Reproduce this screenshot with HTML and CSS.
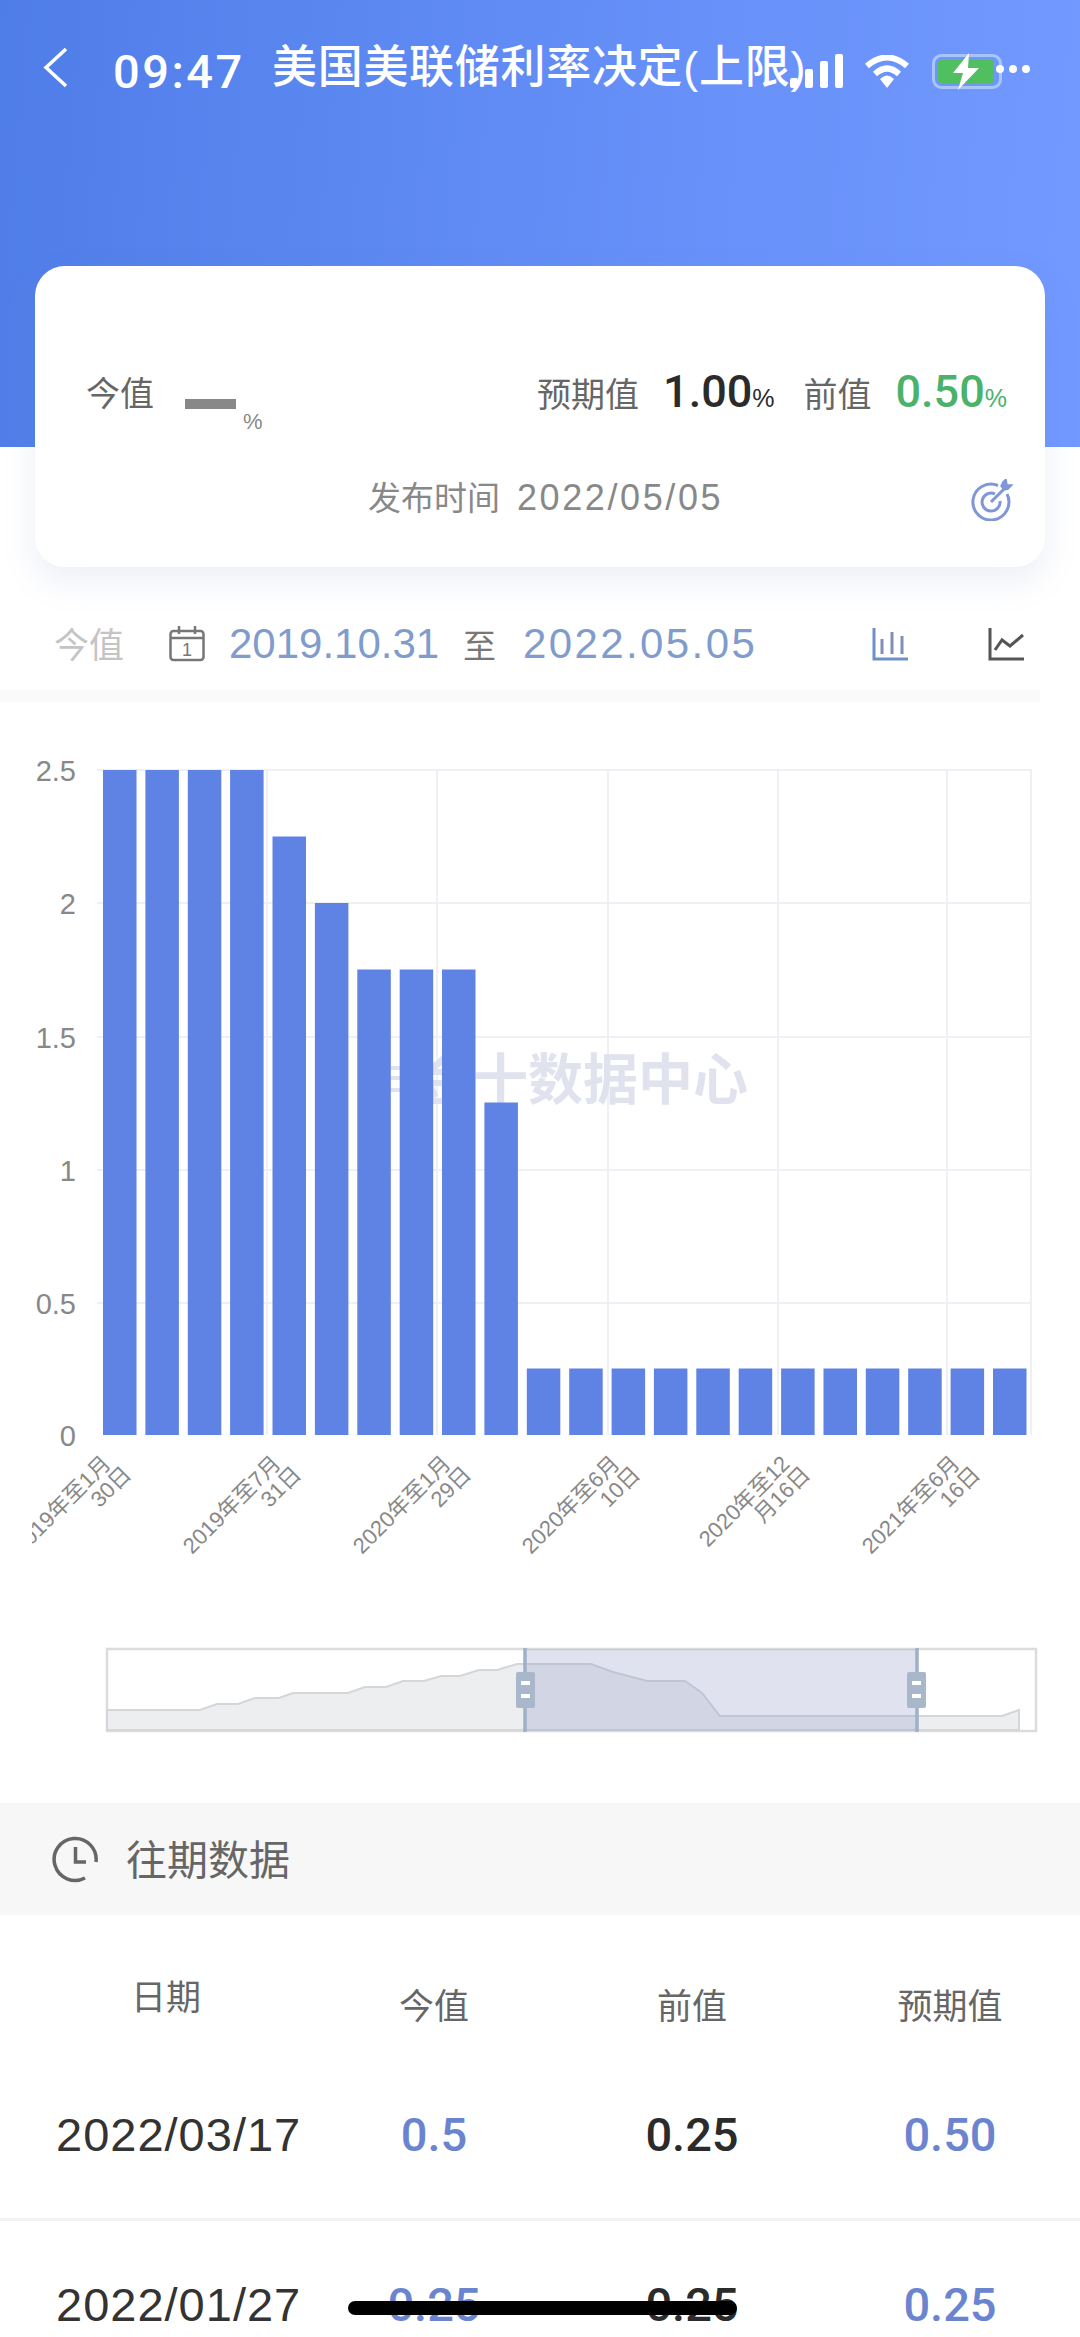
FILE: index.html
```html
<!DOCTYPE html>
<html lang="zh-CN">
<head>
    <meta charset="UTF-8">
    <meta name="viewport" content="width=device-width, initial-scale=1.0">
    <title>美国美联储利率决定(上限)</title>
    <link rel="stylesheet" href="styles.css">
</head>
<body>
    <div class="page">
        <!-- 顶部 -->
        <div class="header">
            <svg class="back" width="25" height="41" viewBox="0 0 25 41"><path d="M23 2 L3 20.5 L23 39" fill="none" stroke="#fff" stroke-width="3.5"/></svg>
            <span class="time">09:47</span>
            <span class="title">美国美联储利率决定(上限)</span>
            <svg class="signal" width="53" height="34" viewBox="0 0 53 34">
                <rect x="0" y="24" width="8" height="10" rx="2" fill="#fff"/>
                <rect x="15" y="15" width="8" height="19" rx="2" fill="#fff"/>
                <rect x="30" y="7" width="8" height="27" rx="2" fill="#fff"/>
                <rect x="45" y="0" width="8" height="34" rx="2" fill="#fff"/>
            </svg>
            <svg class="wifi" width="46" height="33" viewBox="0 0 46 33">
                <path d="M3 11 Q23 -6 43 11" fill="none" stroke="#fff" stroke-width="6"/>
                <path d="M11 19 Q23 8 35 19" fill="none" stroke="#fff" stroke-width="6"/>
                <path d="M16 24 Q23 17 30 24 L23 33 Z" fill="#fff"/>
            </svg>
            <svg class="battery" width="70" height="37" viewBox="0 0 70 37">
                <rect x="1.5" y="2.5" width="67" height="32" rx="8" fill="none" stroke="#a9c4f7" stroke-width="3"/>
                <rect x="6" y="7" width="56" height="23" rx="3" fill="#4fbf5f"/>
                <path d="M37 0 L21 20 H31 L26 37 L47 15 H36 Z" fill="#fff"/>
            </svg>
            <svg class="dots" width="36" height="10" viewBox="0 0 36 10">
                <circle cx="5" cy="5" r="4" fill="#fff"/>
                <circle cx="18" cy="5" r="4" fill="#fff"/>
                <circle cx="31" cy="5" r="4" fill="#fff"/>
            </svg>
        </div>

        <!-- 数值卡片 -->
        <div class="card">
            <div class="card-top">
                <div class="now">
                    <span class="label">今值</span>
                    <span class="dash"></span>
                    <span class="now-unit">%</span>
                </div>
                <div class="others">
                    <span class="label">预期值</span>
                    <span class="num dark">1.00</span><span class="unit dark">%</span>
                    <span class="label second">前值</span>
                    <span class="num green">0.50</span><span class="unit green">%</span>
                </div>
            </div>
            <div class="card-bottom">
                <div class="publish">发布时间<span class="publish-date">2022/05/05</span></div>
                <svg class="target" width="42" height="42" viewBox="0 0 42 42" fill="none" stroke="#7f96d8" stroke-width="3">
                    <path d="M27 6.5 A18 18 0 1 0 36 15"/>
                    <path d="M24 15 A9 9 0 1 0 29 22"/>
                    <path d="M20 23 L33 10"/>
                    <path d="M30 7 L32 3 L35 0 L36 6 L41 6 L37 10 L33 11 Z" fill="#7f96d8" stroke-width="1.5"/>
                </svg>
            </div>
        </div>

        <!-- 日期选择 -->
        <div class="range">
            <span class="range-name">今值</span>
            <svg class="calendar" width="36" height="36" viewBox="0 0 36 36" fill="none" stroke="#777" stroke-width="2.5">
                <rect x="1.5" y="5" width="33" height="29" rx="3"/>
                <path d="M1.5 12 H34.5 M10 0 V8 M26 0 V8"/>
                <text class="calendar-day" x="18" y="30">1</text>
            </svg>
            <span class="date-from">2019.10.31</span>
            <span class="to">至</span>
            <span class="date-to">2022.05.05</span>
            <svg class="chart-btn bar-btn" width="36" height="33" viewBox="0 0 36 33" fill="none" stroke-width="3">
                <path d="M2 0 V31 H36" stroke="#6f8fc8"/>
                <path d="M10 11 V26 M20 4 V26 M30 8 V26" stroke="#7f8fb8"/>
            </svg>
            <svg class="chart-btn line-btn" width="36" height="33" viewBox="0 0 36 33" fill="none" stroke="#555" stroke-width="3">
                <path d="M2 0 V31 H36"/>
                <path d="M7 22 L14 12 L22 18 L35 7"/>
            </svg>
        </div>
        <div class="band"></div>

        <!-- 图表 -->
        <svg class="chart" width="1080" height="1101" viewBox="0 702 1080 1101">
            <defs>
                <clipPath id="labelClip"><rect x="32" y="1440" width="1020" height="130"/></clipPath>
            </defs>
            <g class="grid">
                <path d="M97 770 H1032 M97 903 H1032 M97 1037 H1032 M97 1170 H1032 M97 1303 H1032"/>
                <path d="M267 770 V1435 M437 770 V1435 M608 770 V1435 M778 770 V1435 M947 770 V1435 M1031 770 V1435"/>
            </g>
            <path class="watermark-mark" d="M391 1068 H400 M391 1078 H400 M391 1090 H400"/>
            <text class="watermark" x="418" y="1099">金十数据中心</text>
            <g class="bars">
                <rect x="103" y="770" width="33.5" height="665"/>
                <rect x="145.4" y="770" width="33.5" height="665"/>
                <rect x="187.8" y="770" width="33.5" height="665"/>
                <rect x="230.1" y="770" width="33.5" height="665"/>
                <rect x="272.5" y="836.5" width="33.5" height="598.5"/>
                <rect x="314.9" y="903" width="33.5" height="532"/>
                <rect x="357.3" y="969.5" width="33.5" height="465.5"/>
                <rect x="399.7" y="969.5" width="33.5" height="465.5"/>
                <rect x="442" y="969.5" width="33.5" height="465.5"/>
                <rect x="484.4" y="1102.5" width="33.5" height="332.5"/>
                <rect x="526.8" y="1368.5" width="33.5" height="66.5"/>
                <rect x="569.2" y="1368.5" width="33.5" height="66.5"/>
                <rect x="611.6" y="1368.5" width="33.5" height="66.5"/>
                <rect x="653.9" y="1368.5" width="33.5" height="66.5"/>
                <rect x="696.3" y="1368.5" width="33.5" height="66.5"/>
                <rect x="738.7" y="1368.5" width="33.5" height="66.5"/>
                <rect x="781.1" y="1368.5" width="33.5" height="66.5"/>
                <rect x="823.5" y="1368.5" width="33.5" height="66.5"/>
                <rect x="865.8" y="1368.5" width="33.5" height="66.5"/>
                <rect x="908.2" y="1368.5" width="33.5" height="66.5"/>
                <rect x="950.6" y="1368.5" width="33.5" height="66.5"/>
                <rect x="993" y="1368.5" width="33.5" height="66.5"/>
            </g>
            <g class="y-axis">
                <text x="76" y="781">2.5</text>
                <text x="76" y="914">2</text>
                <text x="76" y="1048">1.5</text>
                <text x="76" y="1181">1</text>
                <text x="76" y="1314">0.5</text>
                <text x="76" y="1446">0</text>
            </g>
            <g class="x-axis" clip-path="url(#labelClip)">
                <text transform="translate(112 1465) rotate(-45)"><tspan x="0" y="0">2019年至1月</tspan><tspan x="7" y="22">30日</tspan></text>
                <text transform="translate(282 1465) rotate(-45)"><tspan x="0" y="0">2019年至7月</tspan><tspan x="7" y="22">31日</tspan></text>
                <text transform="translate(452 1465) rotate(-45)"><tspan x="0" y="0">2020年至1月</tspan><tspan x="7" y="22">29日</tspan></text>
                <text transform="translate(621 1465) rotate(-45)"><tspan x="0" y="0">2020年至6月</tspan><tspan x="7" y="22">10日</tspan></text>
                <text transform="translate(791 1465) rotate(-45)"><tspan x="0" y="0">2020年至12</tspan><tspan x="7" y="22">月16日</tspan></text>
                <text transform="translate(961 1465) rotate(-45)"><tspan x="0" y="0">2021年至6月</tspan><tspan x="7" y="22">16日</tspan></text>
            </g>
            <!-- 缩略轴 -->
            <rect class="zoom-box" x="107" y="1649" width="929" height="82"/>
            <path class="zoom-area" d="M107 1710 H200 L217 1704 H238 L255 1698 H279 L293 1693 H348 L365 1687 H386 L403 1681 H424 L441 1676 H460 L479 1670 H497 L517 1664 H591 L613 1672 L647 1681 H685 L702 1693 L720 1716 H1002 L1019 1710 V1730 H107 Z"/>
            <rect class="zoom-range" x="525" y="1649" width="392" height="82"/>
            <path class="zoom-edge" d="M525 1648 V1732 M917 1648 V1732"/>
            <g class="zoom-handle">
                <rect x="516" y="1672" width="19" height="36" rx="2"/>
                <rect x="907" y="1672" width="19" height="36" rx="2"/>
            </g>
            <path class="zoom-notch" d="M521 1683 H530 M521 1696 H530 M912 1683 H921 M912 1696 H921"/>
        </svg>

        <!-- 往期数据 -->
        <div class="history">
            <svg class="clock" width="47" height="47" viewBox="0 0 47 47" fill="none" stroke="#666" stroke-width="3.5">
                <path d="M33 42 A21 21 0 1 1 44 26"/>
                <path d="M23.5 11 V26 H34"/>
            </svg>
            <span class="history-name">往期数据</span>
        </div>
        <div class="table-head">
            <span class="head-date">日期</span>
            <span>今值</span>
            <span>前值</span>
            <span>预期值</span>
        </div>
        <div class="row">
            <span class="cell-date">2022/03/17</span>
            <span class="blue">0.5</span>
            <span class="black">0.25</span>
            <span class="blue">0.50</span>
        </div>
        <div class="row">
            <span class="cell-date">2022/01/27</span>
            <span class="blue">0.25</span>
            <span class="black">0.25</span>
            <span class="blue">0.25</span>
        </div>
        <div class="home-bar"></div>
    </div>
</body>
</html>
```

FILE: styles.css
```css
* {
    box-sizing: border-box;
}
html, body {
    margin: 0;
    padding: 0;
    background-color: #fff;
}
body {
    font-family: "Liberation Sans", "Noto Sans CJK SC", sans-serif;
    color: #666;
}
.page {
    position: relative;
    width: 1080px;
    height: 2337px;
    overflow: hidden;
}

/* 顶部 */
.header {
    display: flex;
    align-items: flex-start;
    height: 447px;
    padding: 47px 0 0 43px;
    background: linear-gradient(95deg, #4f7de8 0%, #6690f8 60%, #7299ff 100%);
    color: #fff;
}
.back {
    flex: none;
}
.time {
    flex: none;
    width: 159px;
    margin: 2px 0 0 45px;
    font-family: Roboto, "Liberation Sans", sans-serif;
    font-size: 47px;
    font-weight: 500;
    line-height: 46px;
    letter-spacing: 2.5px;
}
.title {
    flex: none;
    width: 518px;
    margin-top: -7px;
    font-size: 45px;
    line-height: 56px;
    font-weight: 500;
    letter-spacing: 0.7px;
    white-space: nowrap;
}
.signal {
    flex: none;
    margin-top: 7px;
}
.wifi {
    flex: none;
    margin: 8px 0 0 21px;
}
.battery {
    flex: none;
    margin: 6px 0 0 22px;
}
.dots {
    flex: none;
    margin: 17px 0 0 -7px;
}

/* 卡片 */
.card {
    height: 301px;
    margin: -181px 35px 0;
    padding-top: 108px;
    background-color: #fff;
    border-radius: 30px;
    box-shadow: 0 14px 34px rgba(110, 130, 190, 0.13);
}
.card-top {
    display: flex;
    justify-content: space-between;
    height: 59px;
    padding: 0 38px 0 51px;
}
.now {
    display: flex;
    align-items: flex-start;
}
.label {
    font-size: 34px;
    line-height: 40px;
    color: #666;
}
.dash {
    width: 51px;
    height: 10px;
    margin: 25px 0 0 31px;
    background-color: #888;
}
.now-unit {
    margin: 37px 0 0 7px;
    font-size: 22px;
    line-height: 22px;
    color: #888;
}
.others {
    display: flex;
    align-items: baseline;
    height: 40px;
    margin-top: -9px;
}
.num {
    margin-left: 24px;
    font-family: Roboto, "Liberation Sans", sans-serif;
    font-size: 45px;
    font-weight: 500;
}
.unit {
    font-size: 25px;
}
.second {
    margin-left: 29px;
}
.dark {
    color: #2b2b2b;
}
.green {
    color: #4bb26c;
}
.card-bottom {
    display: flex;
    align-items: flex-start;
    gap: 248px;
    margin-top: 46px;
    padding-left: 333px;
}
.publish {
    width: 355px;
    font-size: 33px;
    line-height: 38px;
    color: #888;
    white-space: nowrap;
}
.publish-date {
    margin-left: 17px;
    font-size: 36px;
    letter-spacing: 2.6px;
}

/* 日期选择 */
.range {
    display: flex;
    align-items: center;
    height: 123px;
    padding: 31px 0 0 54px;
}
.range-name {
    width: 115px;
    margin-top: -4px;
    font-size: 35px;
    color: #c4c4c4;
}
.calendar {
    flex: none;
    width: 36px;
    margin-right: 24px;
}
.calendar-day {
    font-size: 18px;
    fill: #777;
    stroke: none;
    text-anchor: middle;
}
.date-from, .date-to {
    font-size: 42px;
    color: #7f9ccc;
    white-space: nowrap;
}
.date-from {
    width: 234px;
}
.date-to {
    width: 349px;
    letter-spacing: 2.4px;
}
.to {
    width: 60px;
    font-size: 33px;
    color: #777;
}
.chart-btn {
    flex: none;
}
.line-btn {
    margin-left: 80px;
}
.band {
    width: 1040px;
    height: 12px;
    background-color: #fafafb;
}

/* 图表 */
.chart {
    display: block;
}
.grid path {
    fill: none;
    stroke: #eff0f3;
    stroke-width: 2;
}
.bars rect {
    fill: #5f82e5;
}
.watermark {
    font-size: 55px;
    font-weight: 700;
    fill: #e0e3ee;
}
.watermark-mark {
    stroke: #e0e3ee;
    stroke-width: 4;
}
.y-axis text {
    font-size: 29px;
    fill: #888;
    text-anchor: end;
}
.x-axis text {
    font-size: 22px;
    fill: #888;
    text-anchor: end;
}
.zoom-box {
    fill: #fff;
    stroke: #dcdcdc;
    stroke-width: 2.5;
}
.zoom-area {
    fill: #eceef0;
    stroke: #d4d6d9;
    stroke-width: 2;
}
.zoom-range {
    fill: rgba(143, 156, 196, 0.28);
}
.zoom-edge {
    stroke: #9fb0c8;
    stroke-width: 3.5;
}
.zoom-handle rect {
    fill: #a9b7cb;
}
.zoom-notch {
    stroke: #fff;
    stroke-width: 4;
}

/* 往期数据 */
.history {
    display: flex;
    align-items: center;
    gap: 27px;
    height: 112px;
    padding-left: 52px;
    background-color: #f7f7f7;
    font-size: 41px;
    color: #666;
}
.history-name {
    margin-top: -5px;
}
.table-head, .row {
    display: grid;
    grid-template-columns: 305px repeat(3, 258px);
    text-align: center;
}
.table-head {
    height: 135px;
    padding-top: 74px;
    font-size: 35px;
    line-height: 36px;
    color: #666;
}
.head-date {
    margin-top: -9px;
    padding-left: 131px;
    text-align: left;
}
.row {
    align-items: center;
    height: 168px;
    font-size: 47px;
}
.row + .row {
    border-top: 3px solid #f2f2f2;
    height: 170px;
}
.cell-date {
    padding-left: 56px;
    text-align: left;
    letter-spacing: 1px;
    color: #333;
}
.blue, .black {
    font-family: Roboto, "Liberation Sans", sans-serif;
    font-weight: 500;
}
.blue {
    color: #6a84d0;
}
.black {
    color: #2b2b2b;
}
.home-bar {
    position: absolute;
    left: 348px;
    top: 2301px;
    width: 389px;
    height: 14px;
    border-radius: 7px;
    background-color: #000;
}
```
